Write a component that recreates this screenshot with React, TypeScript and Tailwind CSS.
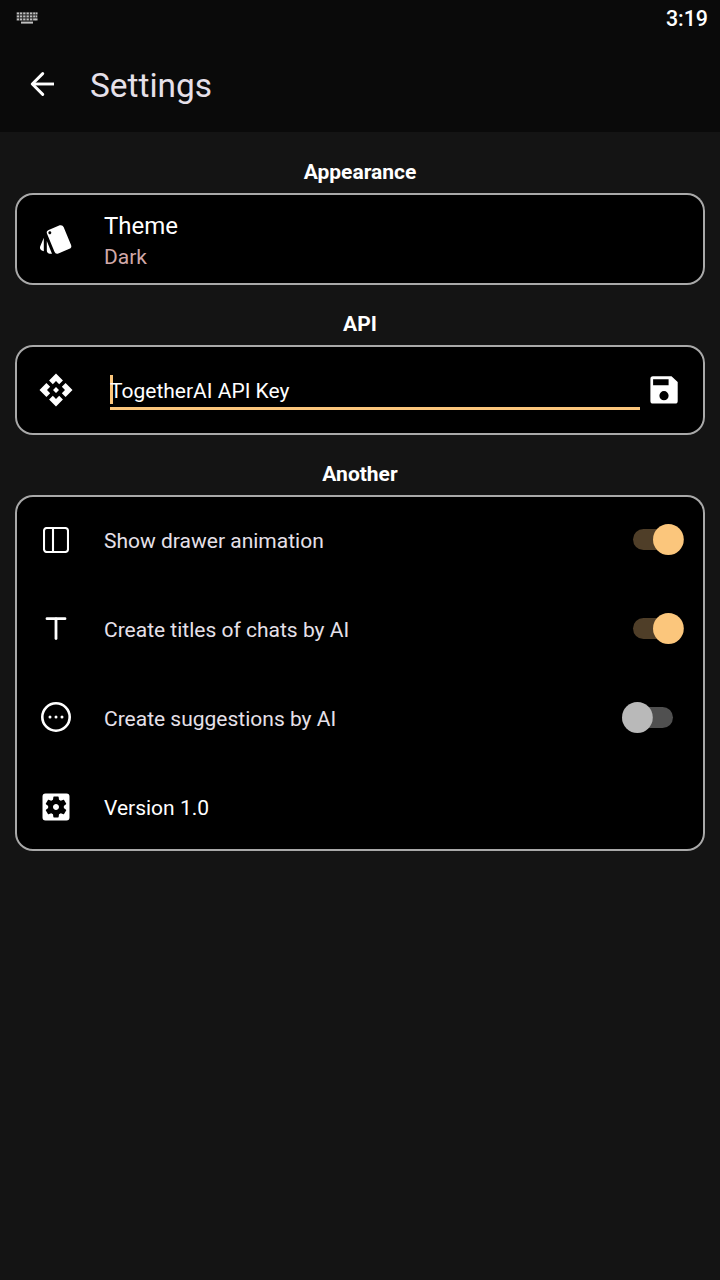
import type { ReactNode } from "react";
import { MdApi, MdSettingsApplications, MdStyle } from "react-icons/md";

function Switch({ on }: { on: boolean }) {
  return (
    <svg
      width="62"
      height="31"
      viewBox="0 0 62 31"
      className="shrink-0"
      role="switch"
      aria-checked={on}
    >
      <rect x="11" y="5" width="40" height="21" rx="10.5" fill={on ? "#4f3e28" : "#505050"} />
      <circle cx={on ? 46.4 : 15.4} cy="15.5" r="15.4" fill={on ? "#fbc67c" : "#b9b9b9"} />
    </svg>
  );
}

function Card({ title, titleClass, cardClass, children }: { title: string; titleClass: string; cardClass: string; children: ReactNode }) {
  return (
    <section className="flex flex-col">
      <h2 className={`text-center text-[21px] leading-[25px] font-bold text-white ${titleClass}`}>{title}</h2>
      <div className={`rounded-[18px] bg-black ring-2 ring-[#a9a9a9] ring-inset ${cardClass}`}>{children}</div>
    </section>
  );
}

function Row({ icon, label, labelClass, children }: { icon: ReactNode; label: string; labelClass: string; children?: ReactNode }) {
  return (
    <div className="flex h-[89px] items-center pr-[21px] pl-[21px]">
      <div className="flex w-10 justify-center text-white">{icon}</div>
      <span className={`ml-7 flex-1 pt-[3px] text-[21px] leading-[25px] ${labelClass}`}>{label}</span>
      {children}
    </div>
  );
}

function KeyboardIcon() {
  const rows = [0.5, 3.5, 6.5];
  const cols = [0.8, 3.9, 7.2, 10.6, 14, 17.2];
  return (
    <svg width="22" height="13" viewBox="0 0 22 13" fill="#c0c0c0" className="mb-px">
      <rect x="0.5" width="21" height="9" fill="#303030" />
      {rows.map((y) =>
        cols.map((x) => <rect key={`${x}-${y}`} x={x} y={y} width="2.2" height="1.8" />),
      )}
      <rect x="20" y="0.5" width="1.5" height="1.8" />
      <rect x="20" y="3.5" width="1.2" height="1.8" />
      <rect x="19" y="6.5" width="2.5" height="1.8" />
      <rect x="5" y="9.6" width="12" height="2" />
    </svg>
  );
}

export default function App() {
  return (
    <div className="flex h-[1280px] w-[720px] flex-col overflow-hidden bg-[#141414] font-['Roboto',sans-serif]">
      <header className="h-[132px] bg-[#0a0a0a]">
        <div className="flex h-[38px] items-center justify-between pr-3 pl-4">
          <KeyboardIcon />
          <span className="mb-0.5 text-[21.4px] leading-[25px] font-medium text-white">3:19</span>
        </div>
        <div className="flex h-[94px] items-center pl-[30px]">
          <svg width="25" height="24" viewBox="0 0 25 24" fill="none" stroke="#fff" strokeWidth="2.9" className="mb-0.5">
            <path d="M24 12H2" />
            <path d="M12.7 1.6 2.3 12l10.4 10.4" strokeLinecap="round" strokeLinejoin="round" />
          </svg>
          <h1 className="mt-0.5 ml-[35px] text-[33.4px] leading-[38px] text-[#e6e0e9]">Settings</h1>
        </div>
      </header>

      <main className="flex flex-col px-[15px]">
        <Card title="Appearance" titleClass="pt-7 pb-2" cardClass="h-[92px]">
          <div className="flex h-full items-center pl-[21px]">
            <div className="flex w-10 justify-center text-white">
              <MdStyle size={36} />
            </div>
            <div className="ml-7 flex flex-col pt-1.5">
              <span className="text-2xl leading-[31px] text-white">Theme</span>
              <span className="text-[21px] leading-[31px] text-[#d0a8a8]">Dark</span>
            </div>
          </div>
        </Card>

        <Card title="API" titleClass="pt-[27px] pb-2" cardClass="h-[90px]">
          <div className="flex h-full items-center pl-[21px]">
            <div className="flex w-10 justify-center text-white">
              <MdApi size={36} />
            </div>
            <div className="mt-[5px] ml-[34px] flex h-[35px] w-[530px] border-b-3 border-[#fbc67c]">
              <div className="h-[29px] w-[3px] bg-[#fbc67c]" />
              <span className="-ml-[3px] pt-[4px] text-[21px] leading-[25px] text-white">TogetherAI API Key</span>
            </div>
            <svg width="28" height="28" viewBox="0 0 28 28" className="ml-2.5">
              <path
                fill="#fff"
                fillRule="evenodd"
                d="M3 .3H21.5L27.7 6V25a2.6 2.6 0 0 1-2.6 2.6H3A2.6 2.6 0 0 1 .4 25V3A2.6 2.6 0 0 1 3 .3ZM3.1 3.2V9.3H18.6V3.2ZM14 15.1a4.6 4.6 0 1 0 0 9.2a4.6 4.6 0 1 0 0-9.2Z"
              />
            </svg>
          </div>
        </Card>

        <Card title="Another" titleClass="pt-[27px] pb-2" cardClass="h-[356px]">
          <Row
            label="Show drawer animation"
            labelClass="text-[#e6e0e9]"
            icon={
              <svg width="26" height="26" viewBox="0 0 26 26" fill="none" stroke="currentColor" strokeWidth="2.1" className="mt-px">
                <rect x="1" y="1" width="24" height="24" rx="2.8" />
                <path d="M10 1v24" />
              </svg>
            }
          >
            <Switch on />
          </Row>
          <Row
            label="Create titles of chats by AI"
            labelClass="text-[#e6e0e9]"
            icon={
              <svg width="22" height="24" viewBox="0 0 22 24" stroke="currentColor" strokeWidth="2.8" strokeLinecap="round" className="mb-px">
                <path d="M2 2.7h18" />
                <path d="M11 3v19.5" />
              </svg>
            }
          >
            <Switch on />
          </Row>
          <Row
            label="Create suggestions by AI"
            labelClass="text-[#e6e0e9]"
            icon={
              <svg width="30" height="30" viewBox="0 0 30 30" fill="currentColor" className="mb-px">
                <circle cx="15" cy="15" r="13.7" fill="none" stroke="currentColor" strokeWidth="2.6" />
                <circle cx="9" cy="15" r="1.5" />
                <circle cx="15" cy="15" r="1.5" />
                <circle cx="21" cy="15" r="1.5" />
              </svg>
            }
          >
            <Switch on={false} />
          </Row>
          <Row label="Version 1.0" labelClass="text-white" icon={<MdSettingsApplications size={36} className="mt-px" />} />
        </Card>
      </main>
    </div>
  );
}
